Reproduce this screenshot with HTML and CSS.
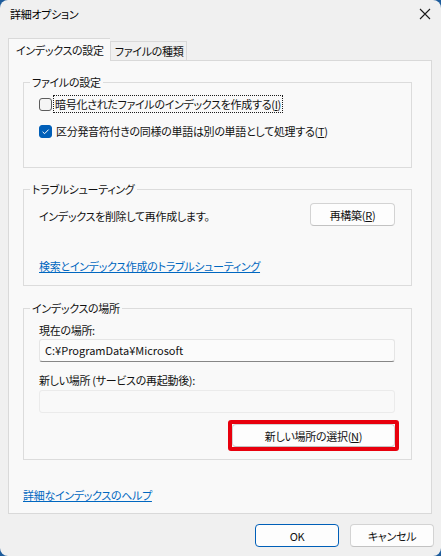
FILE: index.html
```html
<!DOCTYPE html>
<html lang="ja">
<head>
<meta charset="utf-8">
<title>詳細オプション</title>
<link rel="stylesheet" href="styles.css">
</head>
<body>
<div class="win">
  <div class="titlebar">
    <span class="title">詳細オプション</span>
    <svg class="close" width="12" height="12" viewBox="0 0 12 12"><path d="M1 1L11 11M11 1L1 11" stroke="#1b1b1b" stroke-width="1.1" fill="none"/></svg>
  </div>
  <div class="tabs">
    <div class="tab active">インデックスの設定</div>
    <div class="tab">ファイルの種類</div>
  </div>
  <div class="panel">
    <fieldset class="group g1">
      <legend>ファイルの設定</legend>
      <div class="gbody">
        <div class="check-row">
          <span class="box"></span>
          <span class="focus">暗号化されたファイルのインデックスを作成する(<u>I</u>)</span>
        </div>
        <div class="check-row">
          <span class="box checked"><svg width="13" height="13" viewBox="0 0 13 13"><path d="M3.6 6.8L5.6 8.7L9.6 4.6" stroke="#fff" stroke-width="1" fill="none"/></svg></span>
          <span>区分発音符付きの同様の単語は別の単語として処理する(<u>T</u>)</span>
        </div>
      </div>
    </fieldset>
    <fieldset class="group g2">
      <legend>トラブルシューティング</legend>
      <div class="gbody">
        <div class="rebuild-row">
          <span>インデックスを削除して再作成します。</span>
          <button class="btn rebuild">再構築(<u>R</u>)</button>
        </div>
        <a class="link trouble" href="#">検索とインデックス作成のトラブルシューティング</a>
      </div>
    </fieldset>
    <fieldset class="group g3">
      <legend>インデックスの場所</legend>
      <div class="gbody">
        <div class="label">現在の場所:</div>
        <div class="field">C:¥ProgramData¥Microsoft</div>
        <div class="label label2">新しい場所 (サービスの再起動後):</div>
        <div class="field disabled"></div>
        <div class="sel-row">
          <span class="highlight"><button class="btn select">新しい場所の選択(<u>N</u>)</button></span>
        </div>
      </div>
    </fieldset>
    <a class="link help" href="#">詳細なインデックスのヘルプ</a>
  </div>
  <div class="footer">
    <button class="btn ok">OK</button>
    <button class="btn">キャンセル</button>
  </div>
</div>
</body>
</html>
```

FILE: styles.css
```css
html, body {
  margin: 0;
  padding: 0;
}
body {
  background: #1d5c9c;
  font-family: "Noto Sans CJK JP", "Noto Sans", sans-serif;
  font-size: 11px;
  letter-spacing: -0.3px;
  font-feature-settings: "palt";
  color: #111;
}
.win {
  width: 441px;
  height: 556px;
  background: #f0f0f0;
  border-radius: 8px;
  overflow: hidden;
  box-sizing: border-box;
  display: flex;
  flex-direction: column;
}
.titlebar {
  height: 30px;
  display: flex;
  align-items: center;
  justify-content: space-between;
  padding: 0 10px 0 10px;
  box-sizing: border-box;
}
.title {
  line-height: 16px;
  color: #000;
  margin-top: -2px;
}
.close {
  margin-top: -2px;
}
.tabs {
  display: flex;
  align-items: flex-end;
  margin: 8px 0 0 8px;
  height: 22px;
  position: relative;
  z-index: 1;
}
.tab {
  height: 19px;
  line-height: 18px;
  padding: 0 3px 0 4px;
  border: 1px solid #d9d9d9;
  border-bottom: none;
  background: #f0f0f0;
  box-sizing: border-box;
}
.tab.active {
  height: 23px;
  line-height: 22px;
  margin-bottom: -1px;
  padding: 0 6px 0 7px;
  background: #f9f9f9;
  border-right: none;
}
.panel {
  margin: 0 9px 0 8px;
  height: 454px;
  box-sizing: border-box;
  background: #f9f9f9;
  border: 1px solid #d9d9d9;
  padding: 13px 19px 0 14px;
  display: flex;
  flex-direction: column;
}
.group {
  margin: 0;
  padding: 0;
  border: 1px solid #dcdcdc;
  min-width: 0;
}
.group legend {
  padding: 0 2px;
  margin-left: 6px;
  line-height: 16px;
  height: 16px;
}
.gbody {
  padding: 0 16px 0 15px;
}
.g1 .gbody {
  padding-top: 4px;
  padding-bottom: 26px;
}
.check-row {
  display: flex;
  align-items: center;
  height: 20px;
}
.check-row + .check-row {
  margin-top: 7px;
}
.box {
  width: 13px;
  height: 13px;
  box-sizing: border-box;
  border: 1px solid #5c5c5c;
  border-radius: 3px;
  background: #f5f5f5;
  margin-right: 4px;
  display: inline-flex;
  flex: none;
}
.box.checked {
  background: #005fb8;
  border-color: #005fb8;
}
.box.checked svg {
  margin: -1px;
}
.focus {
  outline: 1px dotted #1b1b1b;
  outline-offset: 0;
  line-height: 16px;
  padding: 0 1px 0 1px;
  margin-left: -2px;
}
.g2 {
  margin-top: 13px;
}
.g2 .gbody {
  padding-top: 6px;
  padding-bottom: 11px;
}
.rebuild-row {
  display: flex;
  justify-content: space-between;
  align-items: center;
  height: 23px;
}
.rebuild-row span {
  margin-top: 2px;
}
.btn {
  font-family: inherit;
  font-size: 11px;
  letter-spacing: -0.3px;
  font-feature-settings: "palt";
  color: #111;
  background: #fdfdfd;
  border: 1px solid #d3d3d3;
  border-bottom-color: #c2c2c2;
  border-radius: 4px;
  height: 23px;
  padding: 0;
  box-sizing: border-box;
  line-height: 20px;
}
.rebuild {
  width: 85px;
}
.link {
  color: #0067c0;
  text-decoration: underline;
  line-height: 16px;
  display: block;
  width: max-content;
}
.trouble {
  margin-top: 32px;
}
.g3 {
  margin-top: 14px;
}
.g3 .gbody {
  padding-top: 6px;
  padding-bottom: 8px;
}
.label {
  line-height: 16px;
}
.field {
  margin-top: 1px;
  height: 23px;
  box-sizing: border-box;
  border: 1px solid #e5e5e5;
  border-bottom: 1px solid #868686;
  border-radius: 3px;
  background: #fbfbfb;
  line-height: 21px;
  padding: 0 5px;
  letter-spacing: 0;
}
.label2 {
  margin-top: 10px;
}
.field.disabled {
  margin-top: 2px;
  border-color: #ebebeb;
  background: #f9f9f9;
}
.sel-row {
  display: flex;
  justify-content: flex-end;
  margin: 7px -4px 0 0;
}
.highlight {
  display: inline-flex;
  border: 4px solid #e8000d;
  border-radius: 3px;
}
.select {
  width: 163px;
}
.help {
  margin-top: 27px;
}
.footer {
  display: flex;
  justify-content: flex-end;
  gap: 11px;
  padding: 10px 7px 0 0;
}
.footer .btn {
  width: 84px;
  height: 23px;
}
.footer .ok {
  border: 1px solid #005fb8;
}
```
